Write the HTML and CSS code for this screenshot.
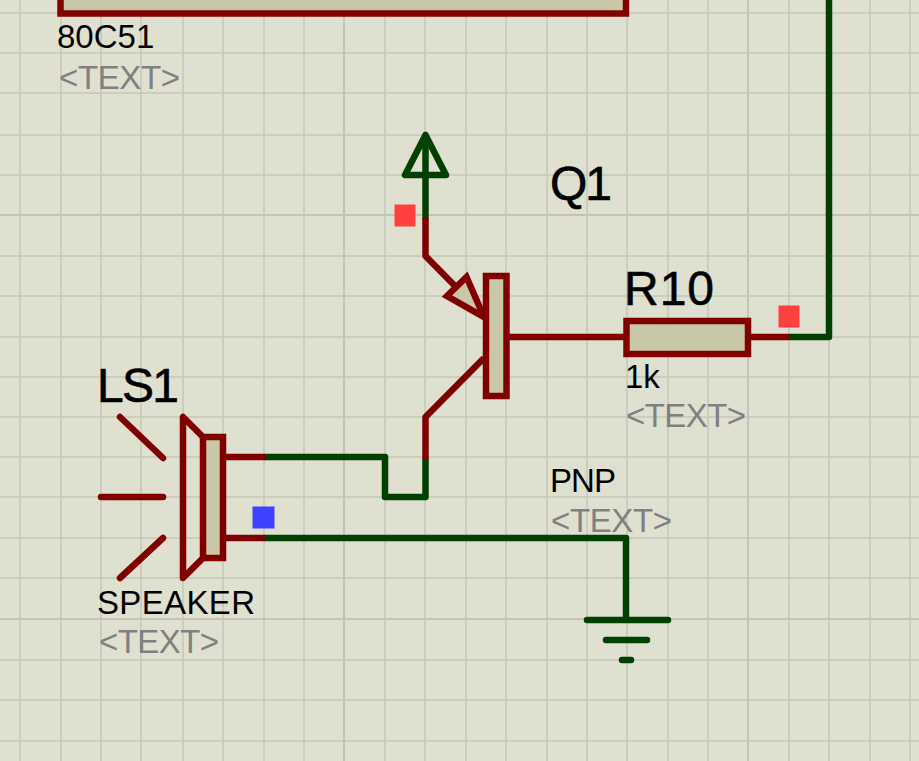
FILE: index.html
```html
<!DOCTYPE html>
<html lang="en">
<head>
    <meta charset="UTF-8">
    <meta name="viewport" content="width=device-width, initial-scale=1.0">
    <title>Speaker driver schematic</title>
    <link rel="stylesheet" href="styles.css">
</head>
<body>
    <svg class="sheet" width="919" height="761" viewBox="0 0 919 761">
        <!-- grid -->
        <path class="grid" d="M20 0V761M61 0V761M101 0V761M141 0V761M183 0V761M223 0V761M264 0V761M304 0V761M385 0V761M425 0V761M466 0V761M506 0V761M547 0V761M587 0V761M627 0V761M668 0V761M708 0V761M789 0V761M829 0V761M870 0V761M910 0V761"/>
        <path class="grid" d="M0 13H919M0 53H919M0 93H919M0 135H919M0 175H919M0 256H919M0 296H919M0 337H919M0 377H919M0 417H919M0 457H919M0 497H919M0 538H919M0 578H919M0 660H919M0 700H919M0 741H919"/>
        <path class="grid-major" d="M344 0V761M748 0V761M0 215H919M0 619H919"/>

        <!-- 80C51 -->
        <rect class="body" x="60.5" y="-20" width="565.5" height="33.5"/>
        <text class="label" x="57" y="48">80C51</text>
        <text class="label hidden-text" x="59" y="89" textLength="121">&lt;TEXT&gt;</text>

        <!-- nets -->
        <path class="wire-net" d="M829 0V337H790"/>
        <path class="wire-net" d="M425.5 218V138"/>
        <path class="wire-net" d="M425.5 459V497H385V457H265"/>
        <path class="wire-net" d="M265 538H626V619"/>

        <!-- power terminal -->
        <path class="wire-net" d="M425.5 135L405 175H446Z"/>

        <!-- ground terminal -->
        <path class="wire-net" d="M587 620H668M606 640H647M622 660H631"/>

        <!-- Q1 -->
        <path class="pin" d="M425.5 218V256L456 287"/>
        <path class="pin" d="M484 358L425.5 417V459"/>
        <path class="pin" d="M506 337H626"/>
        <path class="body" d="M466.5 277L447 296L484 317Z"/>
        <rect class="body" x="486" y="276" width="20.5" height="120"/>
        <text class="label large" x="550" y="200" textLength="62">Q1</text>
        <text class="label" x="550" y="492" textLength="66">PNP</text>
        <text class="label hidden-text" x="551" y="532" textLength="121">&lt;TEXT&gt;</text>

        <!-- R10 -->
        <path class="pin" d="M748 337H790"/>
        <rect class="body" x="626.5" y="321" width="121.5" height="33"/>
        <text class="label large" x="624" y="305" textLength="90">R10</text>
        <text class="label" x="625" y="388">1k</text>
        <text class="label hidden-text" x="626" y="427" textLength="120">&lt;TEXT&gt;</text>

        <!-- LS1 -->
        <path class="pin" d="M223 457H265M223 538H265"/>
        <path class="pin round" d="M120 417L163 458M101 497H163M120 578L163 538"/>
        <path class="pin round" d="M203 437L183 417V578L203 558"/>
        <rect class="body" x="203" y="437" width="20" height="121"/>
        <text class="label large" x="97" y="402" textLength="82">LS1</text>
        <text class="label" x="97" y="614" textLength="158">SPEAKER</text>
        <text class="label hidden-text" x="99" y="653" textLength="120">&lt;TEXT&gt;</text>

        <!-- terminal markers -->
        <rect class="marker" x="394.5" y="204.5" width="21" height="22"/>
        <rect class="marker" x="778.5" y="305.5" width="21" height="22"/>
        <rect class="marker marker-blue" x="252.5" y="506.5" width="22" height="22"/>
    </svg>
</body>
</html>
```

FILE: styles.css
```css
* {
    margin: 0;
    padding: 0;
    box-sizing: border-box;
}

body {
    background: #dfe0d0;
    overflow: hidden;
}

.sheet {
    display: block;
}

.grid {
    fill: none;
    stroke: #c5c6b6;
    stroke-width: 1.5;
}

.grid-major {
    fill: none;
    stroke: #c3c4b4;
    stroke-width: 2;
}

.wire-net {
    fill: none;
    stroke: #004000;
    stroke-width: 6.5;
    stroke-linejoin: round;
    stroke-linecap: round;
}

.pin {
    fill: none;
    stroke: #800000;
    stroke-width: 6.5;
    stroke-linejoin: round;
}

.round {
    stroke-linecap: round;
}

.body {
    fill: #c8c8a8;
    stroke: #800000;
    stroke-width: 6.5;
}

.marker {
    fill: #ff4040;
}

.marker-blue {
    fill: #4040ff;
}

.label {
    font-family: "Liberation Sans", Arial, sans-serif;
    font-size: 33px;
    fill: #000;
}

.large {
    font-size: 48px;
    stroke: #000;
    stroke-width: 0.6;
}

.hidden-text {
    fill: #808080;
}
```
